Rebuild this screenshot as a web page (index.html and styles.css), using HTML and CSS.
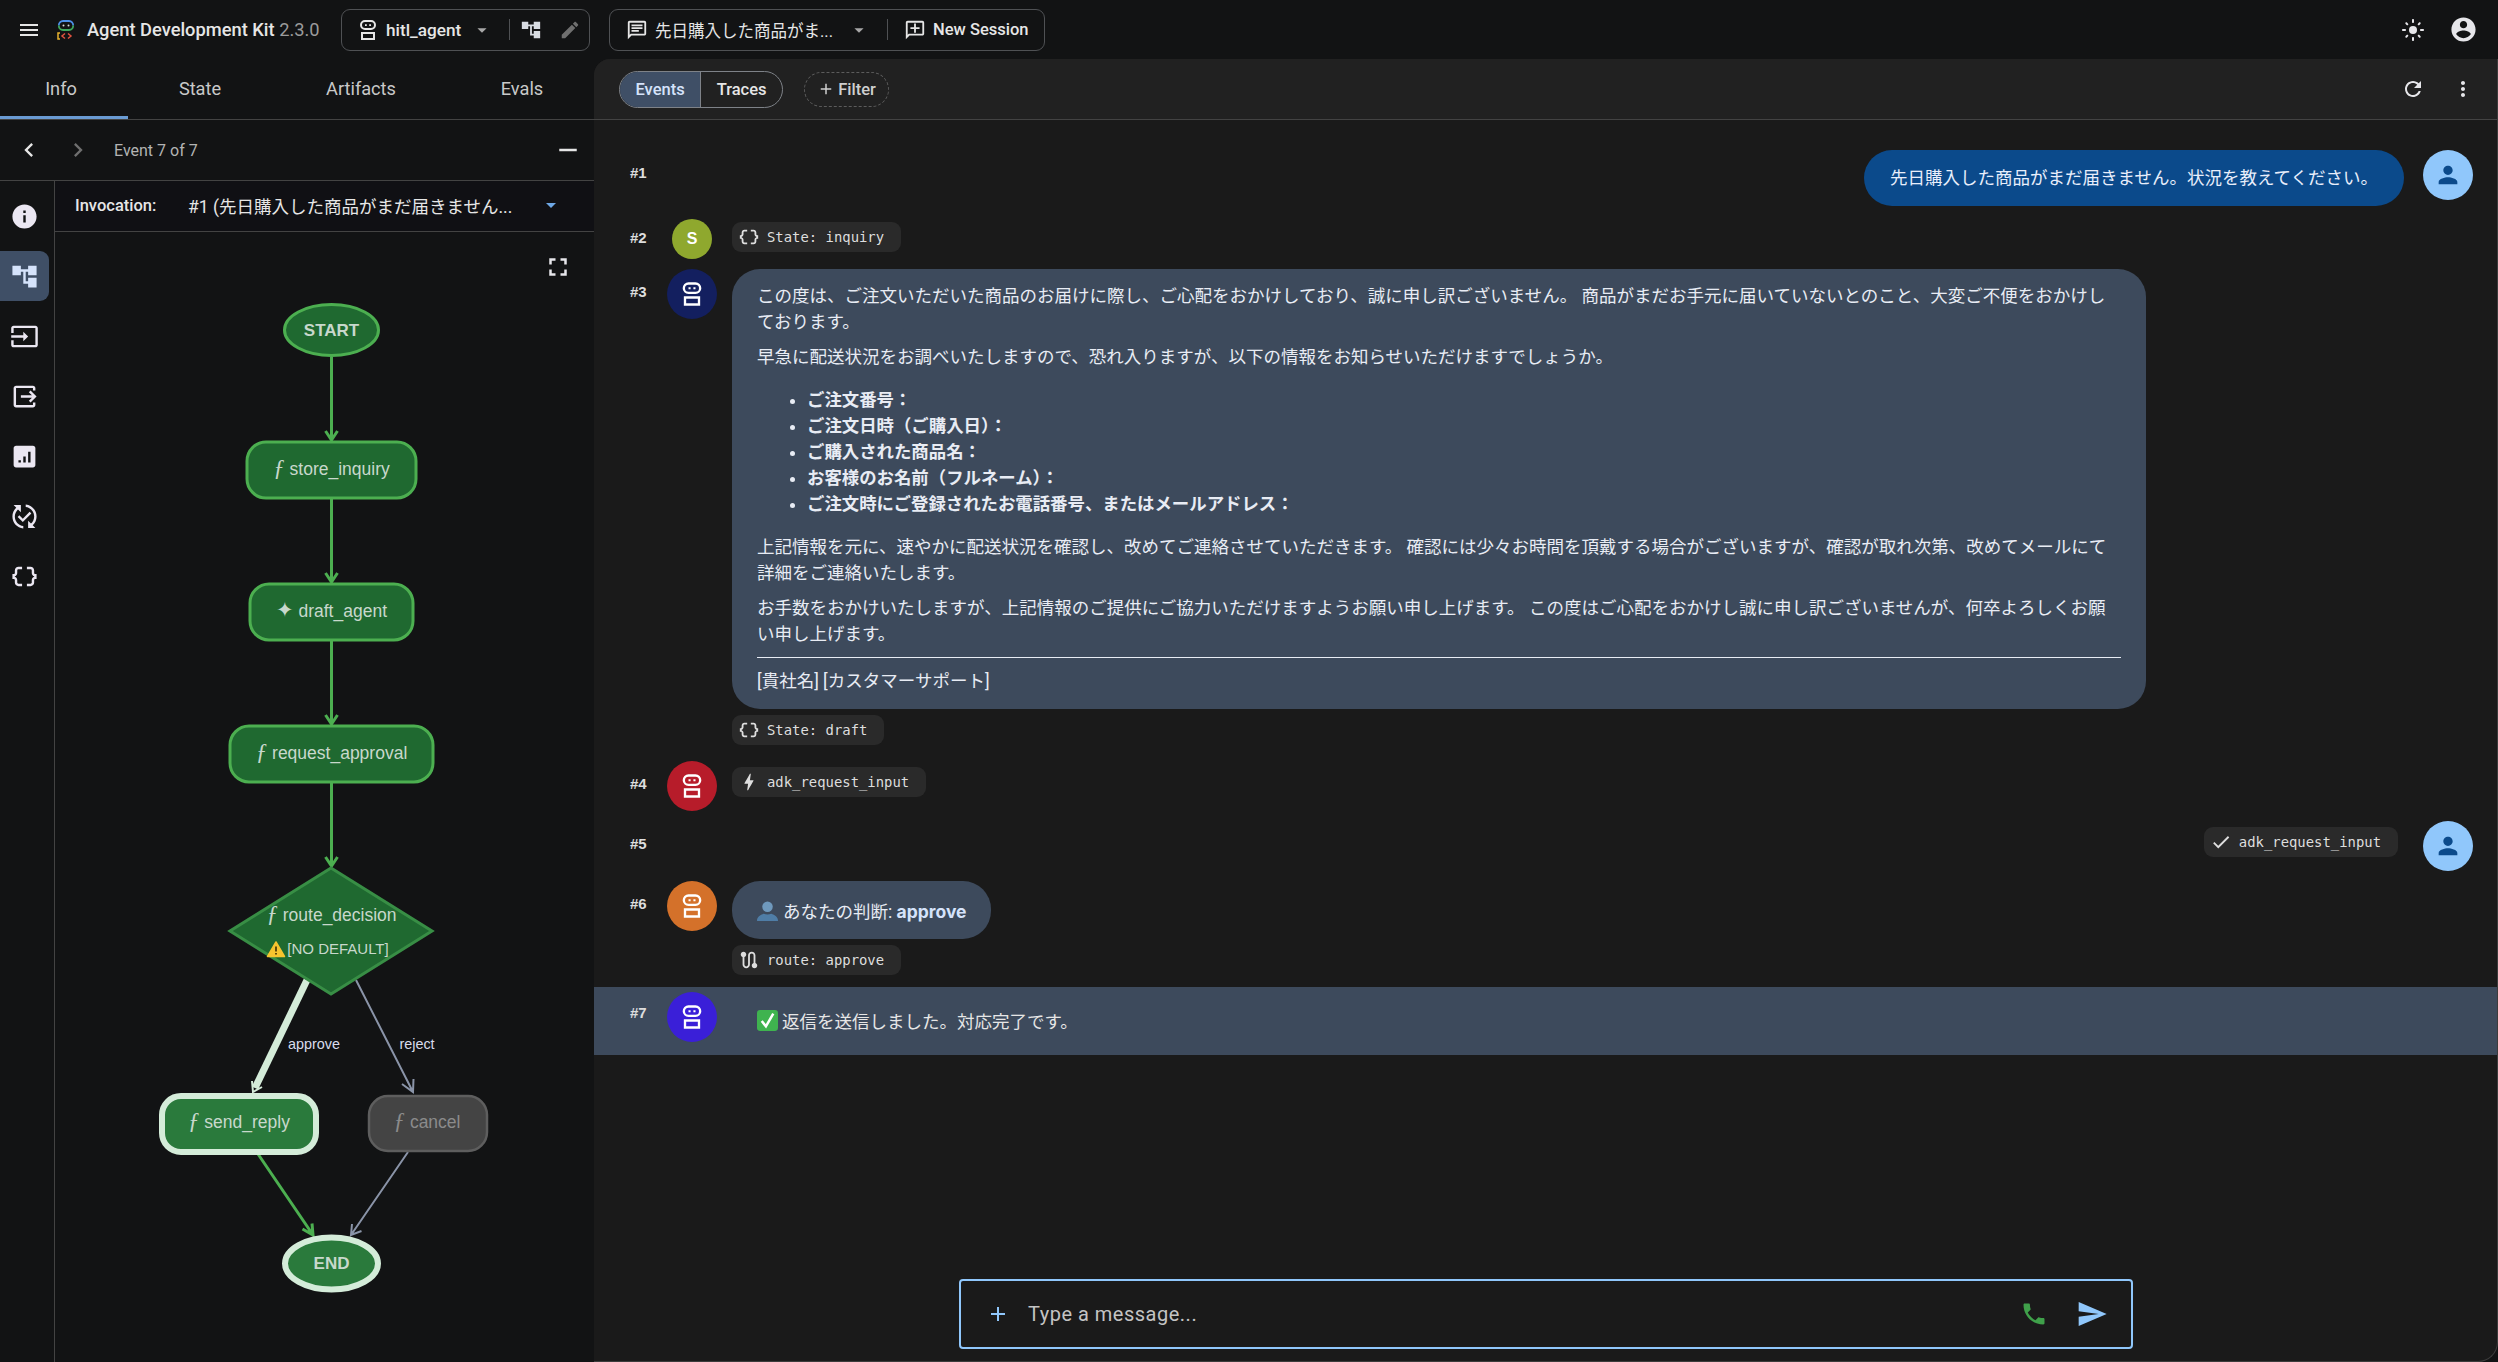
FILE: index.html
```html
<!DOCTYPE html>
<html lang="ja">

<head>
    <meta charset="UTF-8">
    <meta name="viewport" content="width=device-width, initial-scale=1.0">
    <title>Agent Development Kit</title>
    <link rel="stylesheet" href="styles.css">
</head>

<body>
    <svg class="sprite" xmlns="http://www.w3.org/2000/svg">
        <symbol id="i-menu" viewBox="0 0 24 24"><path d="M3 18h18v-2H3v2zm0-5h18v-2H3v2zm0-7v2h18V6H3z"/></symbol>
        <symbol id="i-tree" viewBox="0 0 24 24"><path d="M22 11V3h-7v3H9V3H2v8h7V8h2v10h4v3h7v-8h-7v3h-2V8h2v3z"/></symbol>
        <symbol id="i-edit" viewBox="0 0 24 24"><path d="M3 17.25V21h3.75L17.81 9.94l-3.75-3.75L3 17.25zM20.71 7.04c.39-.39.39-1.02 0-1.41l-2.34-2.34c-.39-.39-1.02-.39-1.41 0l-1.83 1.83 3.75 3.75 1.83-1.83z"/></symbol>
        <symbol id="i-chat" viewBox="0 0 24 24"><path d="M20 2H4c-1.1 0-2 .9-2 2v18l4-4h14c1.1 0 2-.9 2-2V4c0-1.1-.9-2-2-2zm0 14H5.17L4 17.17V4h16v12zM6 12h8v2H6zm0-3h12v2H6zm0-3h12v2H6z"/></symbol>
        <symbol id="i-newchat" viewBox="0 0 24 24"><path d="M20 2H4c-1.1 0-2 .9-2 2v18l4-4h14c1.1 0 2-.9 2-2V4c0-1.1-.9-2-2-2zm0 14H5.17L4 17.17V4h16v12zM11 5h2v4h4v2h-4v4h-2v-4H7V9h4z"/></symbol>
        <symbol id="i-drop" viewBox="0 0 24 24"><path d="M7 10l5 5 5-5z"/></symbol>
        <symbol id="i-bot" viewBox="0 0 24 24"><path fill-rule="evenodd" d="M9 2h6a5 5 0 0 1 0 10H9A5 5 0 0 1 9 2zm0 2a3 3 0 0 0 0 6h6a3 3 0 0 0 0-6zm0 2.2h1.8V8H9zm4.2 0H15V8h-1.800zM5 14h14v8H5zm2 2v4h10v-4z"/></symbol>
        <symbol id="i-info" viewBox="0 0 24 24"><path d="M12 2C6.48 2 2 6.48 2 12s4.48 10 10 10 10-4.48 10-10S17.52 2 12 2zm1 15h-2v-6h2v6zm0-8h-2V7h2v2z"/></symbol>
        <symbol id="i-input" viewBox="0 0 24 24"><path d="M21 3.010H3c-1.100 0-2 .9-2 2V9h2V4.990h18v14.030H3V15H1v4.010c0 1.100.9 1.980 2 1.980h18c1.100 0 2-.88 2-1.980v-14c0-1.110-.9-2-2-2zM11 16l4-4-4-4v3H1v2h10v3z"/></symbol>
        <symbol id="i-output" viewBox="0 0 24 24"><path d="M17 17l5-5-5-5-1.410 1.410L18.170 11H9v2h9.170l-2.580 2.590zM19 19H5V5h14v2h2V5c0-1.100-.9-2-2-2H5c-1.100 0-2 .9-2 2v14c0 1.100.9 2 2 2h14c1.100 0 2-.9 2-2v-2h-2z"/></symbol>
        <symbol id="i-chart" viewBox="0 0 24 24"><path d="M19 3H5c-1.100 0-2 .9-2 2v14c0 1.100.9 2 2 2h14c1.100 0 2-.9 2-2V5c0-1.100-.9-2-2-2zM9 17H7v-2h2v2zm4 0h-2v-5h2v5zm4 0h-2V8h2v9z"/></symbol>
        <symbol id="i-sync" viewBox="0 0 24 24"><path d="M17.660 9.530l-7.070 7.070-4.240-4.240 1.410-1.410 2.830 2.830 5.660-5.660 1.410 1.410zM4 12c0-2.330 1.020-4.420 2.620-5.880L9 8.500v-6H3l2.200 2.200C3.240 6.520 2 9.110 2 12c0 5.190 3.950 9.450 9 9.950v-2.020c-3.940-.49-7-3.860-7-7.930zm18 0c0-5.190-3.950-9.450-9-9.950v2.020c3.940.49 7 3.860 7 7.930 0 2.330-1.020 4.420-2.620 5.880L15 15.500v6h6l-2.200-2.200c1.960-1.820 3.200-4.410 3.200-7.300z"/></symbol>
        <symbol id="i-data" viewBox="0 0 24 24"><path d="M4 7v2c0 .55-.45 1-1 1H2v4h1c.55 0 1 .45 1 1v2c0 1.650 1.350 3 3 3h3v-2H7c-.55 0-1-.45-1-1v-2c0-1.300-.84-2.420-2-2.830v-.34C5.160 11.420 6 10.300 6 9V7c0-.55.45-1 1-1h3V4H7C5.350 4 4 5.350 4 7zM21 10c-.55 0-1-.45-1-1V7c0-1.650-1.350-3-3-3h-3v2h3c.55 0 1 .45 1 1v2c0 1.300.84 2.420 2 2.830v.34c-1.160.41-2 1.520-2 2.830v2c0 .55-.45 1-1 1h-3v2h3c1.650 0 3-1.350 3-3v-2c0-.55.45-1 1-1h1v-4h-1z"/></symbol>
        <symbol id="i-back" viewBox="0 0 24 24"><path d="M15.410 7.410L14 6l-6 6 6 6 1.410-1.410L10.830 12z"/></symbol>
        <symbol id="i-next" viewBox="0 0 24 24"><path d="M10 6L8.590 7.410 13.170 12l-4.580 4.590L10 18l6-6z"/></symbol>
        <symbol id="i-minus" viewBox="0 0 24 24"><path d="M19 13H5v-2h14v2z"/></symbol>
        <symbol id="i-full" viewBox="0 0 24 24"><path d="M7 14H5v5h5v-2H7v-3zm-2-4h2V7h3V5H5v5zm12 7h-3v2h5v-5h-2v3zM14 5v2h3v3h2V5h-5z"/></symbol>
        <symbol id="i-sun" viewBox="0 0 24 24"><circle cx="12" cy="12" r="4"/><path d="M2 13h2c.55 0 1-.45 1-1s-.45-1-1-1H2c-.55 0-1 .45-1 1s.45 1 1 1zm18 0h2c.55 0 1-.45 1-1s-.45-1-1-1h-2c-.55 0-1 .45-1 1s.45 1 1 1zM11 2v2c0 .55.45 1 1 1s1-.45 1-1V2c0-.55-.45-1-1-1s-1 .45-1 1zm0 18v2c0 .55.45 1 1 1s1-.45 1-1v-2c0-.55-.45-1-1-1s-1 .45-1 1zM5.990 4.580c-.39-.39-1.030-.39-1.410 0-.39.39-.39 1.030 0 1.410l1.060 1.060c.39.39 1.030.39 1.410 0s.39-1.030 0-1.410L5.990 4.580zm12.370 12.370c-.39-.39-1.030-.39-1.410 0-.39.39-.39 1.030 0 1.410l1.060 1.060c.39.39 1.030.39 1.410 0 .39-.39.39-1.030 0-1.410l-1.060-1.060zm1.060-10.960c.39-.39.39-1.030 0-1.410-.39-.39-1.030-.39-1.410 0l-1.060 1.060c-.39.39-.39 1.030 0 1.410s1.030.39 1.410 0l1.060-1.060zM7.050 18.360c.39-.39.39-1.030 0-1.410-.39-.39-1.030-.39-1.410 0l-1.060 1.060c-.39.39-.39 1.030 0 1.410s1.030.39 1.410 0l1.060-1.060z"/></symbol>
        <symbol id="i-account" viewBox="0 0 24 24"><path d="M12 2C6.480 2 2 6.480 2 12s4.480 10 10 10 10-4.480 10-10S17.520 2 12 2zm0 3c1.660 0 3 1.340 3 3s-1.340 3-3 3-3-1.340-3-3 1.340-3 3-3zm0 14.200c-2.500 0-4.710-1.280-6-3.220.03-1.990 4-3.080 6-3.080 1.990 0 5.970 1.090 6 3.080-1.290 1.940-3.500 3.220-6 3.220z"/></symbol>
        <symbol id="i-refresh" viewBox="0 0 24 24"><path d="M17.650 6.350C16.200 4.900 14.210 4 12 4c-4.420 0-7.990 3.580-7.990 8s3.570 8 7.990 8c3.730 0 6.840-2.550 7.730-6h-2.080c-.82 2.330-3.040 4-5.650 4-3.310 0-6-2.690-6-6s2.690-6 6-6c1.660 0 3.140.69 4.220 1.780L13 11h7V4l-2.350 2.350z"/></symbol>
        <symbol id="i-more" viewBox="0 0 24 24"><path d="M12 8c1.100 0 2-.9 2-2s-.9-2-2-2-2 .9-2 2 .9 2 2 2zm0 2c-1.100 0-2 .9-2 2s.9 2 2 2 2-.9 2-2-.9-2-2-2zm0 6c-1.100 0-2 .9-2 2s.9 2 2 2 2-.9 2-2-.9-2-2-2z"/></symbol>
        <symbol id="i-person" viewBox="0 0 24 24"><path d="M12 12c2.210 0 4-1.790 4-4s-1.790-4-4-4-4 1.790-4 4 1.790 4 4 4zm0 2c-2.670 0-8 1.340-8 4v2h16v-2c0-2.660-5.330-4-8-4z"/></symbol>
        <symbol id="i-bolt" viewBox="0 0 24 24"><path d="M11 21h-1l1-7H7.500c-.58 0-.57-.32-.38-.66.19-.34.05-.08.07-.12C8.480 10.940 10.420 7.540 13 3h1l-1 7h3.500c.49 0 .56.33.47.51l-.07.15C12.960 17.550 11 21 11 21z"/></symbol>
        <symbol id="i-check" viewBox="0 0 24 24"><path d="M9 16.170L4.830 12l-1.420 1.410L9 19 21 7l-1.410-1.410z"/></symbol>
        <symbol id="i-route" viewBox="0 0 24 24"><path d="M19 15.180V7c0-2.210-1.790-4-4-4s-4 1.790-4 4v10c0 1.100-.9 2-2 2s-2-.9-2-2V8.820C8.160 8.400 9 7.300 9 6c0-1.660-1.340-3-3-3S3 4.340 3 6c0 1.300.84 2.400 2 2.820V17c0 2.210 1.790 4 4 4s4-1.790 4-4V7c0-1.100.9-2 2-2s2 .9 2 2v8.180c-1.160.41-2 1.510-2 2.820 0 1.660 1.340 3 3 3s3-1.340 3-3c0-1.310-.84-2.410-2-2.820z"/></symbol>
        <symbol id="i-send" viewBox="0 0 24 24"><path d="M2.010 21L23 12 2.010 3 2 10l15 2-15 2z"/></symbol>
        <symbol id="i-call" viewBox="0 0 24 24"><path d="M6.620 10.790c1.440 2.830 3.760 5.140 6.590 6.590l2.200-2.200c.27-.27.67-.36 1.020-.24 1.120.37 2.330.57 3.570.57.55 0 1 .45 1 1V20c0 .55-.45 1-1 1-9.390 0-17-7.610-17-17 0-.55.45-1 1-1h3.500c.55 0 1 .45 1 1 0 1.250.2 2.450.57 3.570.11.35.03.74-.25 1.020l-2.200 2.200z"/></symbol>
        <symbol id="i-add" viewBox="0 0 24 24"><path d="M19 13h-6v6h-2v-6H5v-2h6V5h2v6h6v2z"/></symbol>
    </svg>

    <header class="topbar">
        <svg class="icon icon-menu"><use href="#i-menu"/></svg>
        <svg class="logo" viewBox="0 0 18 20">
            <path d="M1.800 5.500C1.800 3 3.500 1 6 1h6c2.500 0 4.200 2 4.200 4.500" fill="none" stroke="#4d8fe8" stroke-width="1.800"/>
            <path d="M1.800 5.500C1.800 8 3.500 10 6 10h6c2.500 0 4.200-2 4.200-4.500" fill="none" stroke="#3fa85c" stroke-width="1.800"/>
            <circle cx="6.500" cy="5.500" r="1" fill="#d8d8d8"/><circle cx="11.500" cy="5.500" r="1" fill="#d8d8d8"/>
            <path d="M3 13H1v6h2" fill="none" stroke="#e8b32e" stroke-width="1.500"/>
            <path d="M8 13.500L5 16l3 2.500" fill="none" stroke="#e0533f" stroke-width="1.500"/>
            <path d="M11 13.500l3 2.500-3 2.500" fill="none" stroke="#e0533f" stroke-width="1.500"/>
        </svg>
        <div class="brand">Agent Development Kit <span class="version">2.3.0</span></div>

        <div class="selector selector-agent">
            <svg class="icon"><use href="#i-bot"/></svg>
            <span class="selector-text agent-name">hitl_agent</span>
            <svg class="icon icon-drop"><use href="#i-drop"/></svg>
            <span class="divider"></span>
            <svg class="icon icon-tree"><use href="#i-tree"/></svg>
            <svg class="icon icon-pencil"><use href="#i-edit"/></svg>
        </div>

        <div class="selector selector-session">
            <svg class="icon icon-20"><use href="#i-chat"/></svg>
            <span class="selector-text session-name">先日購入した商品がま...</span>
            <svg class="icon icon-drop"><use href="#i-drop"/></svg>
            <span class="divider"></span>
            <svg class="icon icon-20"><use href="#i-newchat"/></svg>
            <span class="selector-text new-session">New Session</span>
        </div>

        <div class="actions">
            <button class="icon-btn"><svg class="icon"><use href="#i-sun"/></svg></button>
            <button class="icon-btn"><svg class="icon icon-28"><use href="#i-account"/></svg></button>
        </div>
    </header>

    <div class="layout">
        <aside class="side">
            <nav class="tabs">
                <div class="tab tab-on">Info</div>
                <div class="tab">State</div>
                <div class="tab">Artifacts</div>
                <div class="tab">Evals</div>
            </nav>
            <div class="event-nav">
                <svg class="icon nav-back"><use href="#i-back"/></svg>
                <svg class="icon nav-next"><use href="#i-next"/></svg>
                <span class="event-count">Event 7 of 7</span>
                <svg class="icon nav-min"><use href="#i-minus"/></svg>
            </div>
            <div class="side-body">
                <div class="rail">
                    <div class="rail-item rail-info"><svg class="icon icon-28"><use href="#i-info"/></svg></div>
                    <div class="rail-item rail-on"><svg class="icon icon-28"><use href="#i-tree"/></svg></div>
                    <div class="rail-item"><svg class="icon icon-28"><use href="#i-input"/></svg></div>
                    <div class="rail-item"><svg class="icon icon-28"><use href="#i-output"/></svg></div>
                    <div class="rail-item"><svg class="icon icon-28"><use href="#i-chart"/></svg></div>
                    <div class="rail-item"><svg class="icon icon-28"><use href="#i-sync"/></svg></div>
                    <div class="rail-item"><svg class="icon icon-28"><use href="#i-data"/></svg></div>
                </div>
                <div class="graph-panel">
                    <div class="invocation">
                        <span class="inv-label">Invocation:</span>
                        <span class="inv-value">#1 (先日購入した商品がまだ届きません...</span>
                        <svg class="icon inv-drop"><use href="#i-drop"/></svg>
                    </div>
                    <div class="graph">
                        <svg class="icon graph-full"><use href="#i-full"/></svg>
                        <svg class="graph-svg" viewBox="55 232 539 1130">
                            <!-- edges -->
                            <g class="edge-green">
                                <path d="M331.500 357V440M325.500 431l6 9 6-9"/>
                                <path d="M331.500 499V582M325.500 573l6 9 6-9"/>
                                <path d="M331.500 641V724M325.500 715l6 9 6-9"/>
                                <path d="M331.500 783V866M325.500 857l6 9 6-9"/>
                                <path d="M258 1154L313 1235M302.500 1229l10.500 6-1-11.500"/>
                            </g>
                            <g class="edge-grey">
                                <path d="M356 980L413 1092M402 1084l11 8 .5-13"/>
                                <path d="M408 1152L351 1235M352 1224l-1 11 10.500-4"/>
                            </g>
                            <path class="edge-hot" d="M307 980L255 1088"/>
                            <path class="edge-hot-tip" d="M252 1081l1 11 9-5"/>

                            <!-- nodes -->
                            <ellipse class="node" cx="331.500" cy="330" rx="47" ry="25.500"/>
                            <rect class="node" x="247" y="442" width="169" height="56" rx="19"/>
                            <rect class="node" x="250" y="584" width="163" height="56" rx="19"/>
                            <rect class="node" x="230" y="726" width="203" height="56" rx="19"/>
                            <polygon class="node-thin" points="331,868 432,931 331,994 230,931"/>
                            <rect class="node-on" x="162" y="1096" width="154" height="56" rx="19"/>
                            <rect class="node-off" x="369" y="1096" width="118" height="55" rx="19"/>
                            <ellipse class="node-on" cx="331.500" cy="1263.500" rx="46.500" ry="26"/>

                            <!-- labels -->
                            <text class="node-strong" x="331.500" y="336">START</text>
                            <text class="node-text" x="331.500" y="475"><tspan class="fn">ƒ</tspan> store_inquiry</text>
                            <text class="node-text" x="331.500" y="617"><tspan class="star">✦</tspan> draft_agent</text>
                            <text class="node-text" x="331.500" y="759"><tspan class="fn">ƒ</tspan> request_approval</text>
                            <text class="node-text" x="331.500" y="921"><tspan class="fn">ƒ</tspan> route_decision</text>
                            <text class="node-small" x="338" y="954">[NO DEFAULT]</text>
                            <text class="node-text" x="239" y="1128"><tspan class="fn">ƒ</tspan> send_reply</text>
                            <text class="node-text node-text-off" x="427" y="1128"><tspan class="fn">ƒ</tspan> cancel</text>
                            <text class="node-strong" x="331.500" y="1269">END</text>
                            <text class="edge-label" x="314" y="1049">approve</text>
                            <text class="edge-label" x="417" y="1049">reject</text>

                            <path d="M276 942l8.500 14.500h-17z" fill="#f6c42f" stroke="#f6c42f" stroke-width="1.500" stroke-linejoin="round"/>
                            <path d="M276 946.500v5M276 953v1.500" stroke="#3b2c00" stroke-width="1.600"/>
                        </svg>
                    </div>
                </div>
            </div>
        </aside>

        <main class="main">
            <div class="toolbar">
                <div class="segmented">
                    <div class="seg seg-on">Events</div>
                    <div class="seg">Traces</div>
                </div>
                <div class="filter"><svg class="icon icon-filter"><use href="#i-add"/></svg>Filter</div>
                <div class="actions">
                    <button class="icon-btn"><svg class="icon"><use href="#i-refresh"/></svg></button>
                    <button class="icon-btn"><svg class="icon"><use href="#i-more"/></svg></button>
                </div>
            </div>

            <section class="messages">
                <div class="msg msg-first">
                    <span class="num">#1</span>
                    <div class="user-side">
                        <div class="bubble-user">先日購入した商品がまだ届きません。状況を教えてください。</div>
                        <div class="avatar avatar-user"><svg class="icon"><use href="#i-person"/></svg></div>
                    </div>
                </div>

                <div class="msg">
                    <span class="num num-up">#2</span>
                    <div class="avatar-slot"><div class="avatar avatar-s">S</div></div>
                    <div class="msg-body">
                        <div class="pill pill-up"><svg class="icon pill-icon"><use href="#i-data"/></svg>State: inquiry</div>
                    </div>
                </div>

                <div class="msg">
                    <span class="num">#3</span>
                    <div class="avatar-slot"><div class="avatar avatar-navy"><svg class="icon"><use href="#i-bot"/></svg></div></div>
                    <div class="msg-body">
                        <div class="bubble bubble-long">
                            <p>この度は、ご注文いただいた商品のお届けに際し、ご心配をおかけしており、誠に申し訳ございません。 商品がまだお手元に届いていないとのこと、大変ご不便をおかけしております。</p>
                            <p>早急に配送状況をお調べいたしますので、恐れ入りますが、以下の情報をお知らせいただけますでしょうか。</p>
                            <ul>
                                <li>ご注文番号：</li>
                                <li>ご注文日時（ご購入日）：</li>
                                <li>ご購入された商品名：</li>
                                <li>お客様のお名前（フルネーム）：</li>
                                <li>ご注文時にご登録されたお電話番号、またはメールアドレス：</li>
                            </ul>
                            <p>上記情報を元に、速やかに配送状況を確認し、改めてご連絡させていただきます。 確認には少々お時間を頂戴する場合がございますが、確認が取れ次第、改めてメールにて詳細をご連絡いたします。</p>
                            <p>お手数をおかけいたしますが、上記情報のご提供にご協力いただけますようお願い申し上げます。 この度はご心配をおかけし誠に申し訳ございませんが、何卒よろしくお願い申し上げます。</p>
                            <hr>
                            <p>[貴社名] [カスタマーサポート]</p>
                        </div>
                        <div class="pill"><svg class="icon pill-icon"><use href="#i-data"/></svg>State: draft</div>
                    </div>
                </div>

                <div class="msg">
                    <span class="num">#4</span>
                    <div class="avatar-slot"><div class="avatar avatar-red"><svg class="icon"><use href="#i-bot"/></svg></div></div>
                    <div class="msg-body">
                        <div class="pill"><svg class="icon pill-icon"><use href="#i-bolt"/></svg>adk_request_input</div>
                    </div>
                </div>

                <div class="msg msg-short">
                    <span class="num">#5</span>
                    <div class="user-side">
                        <div class="pill"><svg class="icon pill-icon"><use href="#i-check"/></svg>adk_request_input</div>
                        <div class="avatar avatar-user"><svg class="icon"><use href="#i-person"/></svg></div>
                    </div>
                </div>

                <div class="msg msg-before-on">
                    <span class="num">#6</span>
                    <div class="avatar-slot"><div class="avatar avatar-orange"><svg class="icon"><use href="#i-bot"/></svg></div></div>
                    <div class="msg-body">
                        <div class="bubble bubble-short">
                            <svg class="emoji" viewBox="0 0 20 20">
                                <circle cx="10" cy="6.500" r="5" fill="#6f99bd"/>
                                <path d="M0 20c0-4 3-6 6.500-7 2 1 5 1 7 0 3.500 1 6.500 3 6.500 7z" fill="#4f7da6"/>
                            </svg>
                            <span>あなたの判断: <b>approve</b></span>
                        </div>
                        <div class="pill"><svg class="icon pill-icon"><use href="#i-route"/></svg>route: approve</div>
                    </div>
                </div>

                <div class="msg msg-on">
                    <span class="num num-on">#7</span>
                    <div class="avatar-slot"><div class="avatar avatar-purple"><svg class="icon"><use href="#i-bot"/></svg></div></div>
                    <div class="msg-body msg-plain">
                        <svg class="emoji" viewBox="0 0 20 20">
                            <rect width="20" height="20" rx="3" fill="#3fb34f"/>
                            <path d="M4.500 10.500l4 5 7-12" fill="none" stroke="#fff" stroke-width="2.400"/>
                        </svg>
                        <span>返信を送信しました。対応完了です。</span>
                    </div>
                </div>
            </section>

            <div class="composer">
                <div class="input-box">
                    <svg class="icon input-plus"><use href="#i-add"/></svg>
                    <span class="placeholder">Type a message...</span>
                    <svg class="icon input-call"><use href="#i-call"/></svg>
                    <svg class="icon input-send"><use href="#i-send"/></svg>
                </div>
            </div>
        </main>
    </div>
</body>

</html>
```

FILE: styles.css
```css
* {
    box-sizing: border-box;
}

html, body {
    height: 100%;
}

body {
    margin: 0;
    display: flex;
    flex-direction: column;
    overflow: hidden;
    background-color: #121314;
    color: #e6e6e6;
    font-family: Roboto, "Noto Sans CJK JP", sans-serif;
    font-size: 17.5px;
}

.sprite {
    display: none;
}

.icon {
    width: 24px;
    height: 24px;
    fill: currentColor;
    flex-shrink: 0;
    display: block;
}

.icon-20 { width: 22px; height: 22px; }
.icon-28 { width: 29px; height: 29px; }

/* top bar */
.topbar {
    height: 59px;
    flex-shrink: 0;
    display: flex;
    align-items: center;
    padding-left: 17px;
}

.logo {
    width: 18px;
    height: 20px;
    margin-left: 16px;
    margin-right: 12px;
    flex-shrink: 0;
}

.brand {
    width: 254px;
    font-size: 18.3px;
    font-weight: 500;
    white-space: nowrap;
}

.version {
    color: #9b9b9b;
    font-weight: 400;
}

.selector {
    height: 42px;
    border: 1px solid #4f5154;
    border-radius: 9px;
    display: flex;
    align-items: center;
    margin-right: 19px;
}

.selector-agent {
    width: 249px;
    padding-left: 14px;
}

.selector-session {
    width: 436px;
    padding-left: 16px;
}

.selector-text {
    font-size: 16.5px;
    font-weight: 500;
    white-space: nowrap;
}

.agent-name { width: 85px; margin-left: 6px; font-size: 17.2px; }
.session-name { width: 193px; margin-left: 7px; font-weight: 400; }
.new-session { margin-left: 7px; }

.icon-drop {
    width: 22px;
    height: 22px;
    color: #a8a8a8;
}

.divider {
    width: 1px;
    height: 21px;
    background-color: #4f5154;
    margin-left: 16px;
    margin-right: 10px;
}

.selector-session .divider {
    margin-left: 17px;
    margin-right: 16px;
}

.icon-tree {
    width: 22px;
    height: 22px;
    color: #d8dce2;
}

.icon-pencil {
    width: 22px;
    height: 22px;
    margin-left: 17px;
    color: #6f6f6f;
}

.actions {
    margin-left: auto;
    padding-right: 20px;
    display: flex;
    gap: 20px;
}

.toolbar .actions {
    padding-right: 19px;
}

.icon-btn {
    width: 30px;
    height: 30px;
    padding: 0;
    background: none;
    border: none;
    color: #e6e6ea;
    display: flex;
    align-items: center;
    justify-content: center;
}

/* layout */
.layout {
    flex: 1;
    display: flex;
    min-height: 0;
}

.side {
    width: 594px;
    flex-shrink: 0;
    display: flex;
    flex-direction: column;
}

.tabs {
    height: 61px;
    flex-shrink: 0;
    display: grid;
    grid-template-columns: 128px 144px 178px 144px;
    border-bottom: 1px solid #434343;
}

.tab {
    display: flex;
    align-items: center;
    justify-content: center;
    padding-bottom: 2px;
    font-size: 18.2px;
    color: #c9c9c9;
}

.tab-on {
    padding-right: 6px;
    box-shadow: inset 0 -3px 0 #6a9bd3;
}

.event-nav {
    height: 61px;
    flex-shrink: 0;
    display: flex;
    align-items: center;
    border-bottom: 1px solid #434343;
    padding-left: 15px;
    padding-right: 11px;
}

.nav-back {
    width: 28px;
    height: 28px;
}

.nav-next {
    width: 28px;
    height: 28px;
    margin-left: 21px;
    color: #6f6f6f;
}

.event-count {
    margin-left: 22px;
    font-size: 16px;
    color: #b3b3b3;
}

.nav-min {
    width: 30px;
    height: 30px;
    margin-left: auto;
}

.side-body {
    flex: 1;
    display: flex;
    min-height: 0;
}

.rail {
    width: 55px;
    flex-shrink: 0;
    border-right: 1px solid #434343;
    padding-top: 10px;
    display: flex;
    flex-direction: column;
    gap: 10px;
}

.rail-item {
    width: 49px;
    height: 50px;
    display: flex;
    align-items: center;
    justify-content: center;
    color: #ebe7f2;
    border-radius: 0 9px 9px 0;
}

.rail-on {
    background-color: #3f4f66;
    color: #d5e3fb;
}

.graph-panel {
    flex: 1;
    display: flex;
    flex-direction: column;
    min-width: 0;
}

.invocation {
    height: 51px;
    flex-shrink: 0;
    display: flex;
    align-items: center;
    border-bottom: 1px solid #434343;
    background-color: #101014;
    padding: 0 0 2px 20px;
    font-size: 16.5px;
}

.inv-label {
    width: 113px;
    font-weight: 500;
}

.inv-value {
    width: 351px;
    white-space: nowrap;
    font-size: 17.5px;
}

.inv-drop {
    color: #6ea8e6;
}

.graph {
    flex: 1;
    position: relative;
    min-height: 0;
}

.graph-svg {
    display: block;
    width: 539px;
    height: 1130px;
}

.graph-full {
    position: absolute;
    top: 20px;
    right: 21px;
    width: 30px;
    height: 30px;
    color: #e6e6ea;
}

.edge-green path {
    fill: none;
    stroke: #4caf50;
    stroke-width: 3;
}

.edge-grey path {
    fill: none;
    stroke: #8a94a8;
    stroke-width: 2;
}

.edge-hot {
    fill: none;
    stroke: #d4ecd9;
    stroke-width: 7;
}

.edge-hot-tip {
    fill: none;
    stroke: #d4ecd9;
    stroke-width: 2;
}

.node {
    fill: #1f6930;
    stroke: #4caf50;
    stroke-width: 3;
}

.node-thin {
    fill: #1f6930;
    stroke: #388e45;
    stroke-width: 3;
}

.node-on {
    fill: #2a7a3c;
    stroke: #d4ecd9;
    stroke-width: 6;
}

.node-off {
    fill: #444444;
    stroke: #5e5e5e;
    stroke-width: 2.5;
}

.node-text, .node-strong, .node-small, .edge-label {
    font-family: "Liberation Sans", sans-serif;
    text-anchor: middle;
    fill: #c8d8cc;
}

.node-text { font-size: 17.5px; }
.node-text-off { fill: #8b8b8b; }
.node-strong { font-size: 17px; font-weight: 700; }
.node-small { font-size: 15px; }
.edge-label { font-size: 14.4px; fill: #d9dcec; }

.fn {
    font-family: "Liberation Serif", serif;
    font-style: italic;
    font-size: 23px;
}

.star {
    font-family: "DejaVu Sans", sans-serif;
    font-size: 21px;
}

/* chat side */
.main {
    flex: 1;
    min-width: 0;
    display: flex;
    flex-direction: column;
    background-color: #1a1a1a;
    border-right: 1px solid #3c3c3c;
    border-bottom: 1px solid #3c3c3c;
    border-top-left-radius: 16px;
    border-bottom-right-radius: 20px;
    overflow: hidden;
}

.toolbar {
    height: 61px;
    flex-shrink: 0;
    display: flex;
    align-items: center;
    padding-left: 25px;
    background-color: #212121;
    border-bottom: 1px solid #434343;
}

.segmented {
    display: flex;
    height: 37px;
    border: 1px solid #7e8288;
    border-radius: 19px;
    overflow: hidden;
    font-size: 16.5px;
    font-weight: 500;
}

.seg {
    padding: 0 15.5px;
    display: flex;
    align-items: center;
}

.seg-on {
    background-color: #3f4f66;
    color: #d5e3fb;
    border-right: 1px solid #7e8288;
}

.filter {
    margin-left: 21px;
    height: 35px;
    width: 85px;
    border: 1px dashed #5c5c5c;
    border-radius: 18px;
    display: flex;
    align-items: center;
    justify-content: center;
    font-size: 16.5px;
    font-weight: 500;
    color: #cfcfcf;
}

.icon-filter {
    width: 18px;
    height: 18px;
    margin-right: 3px;
}

.messages {
    flex: 1;
    min-height: 0;
    padding-top: 30px;
}

.msg {
    display: flex;
    align-items: flex-start;
    padding-left: 36px;
    padding-right: 24px;
    margin-bottom: 10px;
}

.msg-first {
    margin-bottom: 13px;
}

.msg-before-on {
    margin-bottom: 6px;
}

.num {
    width: 37px;
    flex-shrink: 0;
    margin-top: 15px;
    font-family: "Liberation Sans", sans-serif;
    font-size: 15px;
    line-height: 16px;
    font-weight: 700;
    color: #dddddd;
}

.num-up {
    margin-top: 11px;
}

.num-on {
    margin-top: 13px;
}

.avatar-slot {
    width: 50px;
    flex-shrink: 0;
    display: flex;
    justify-content: center;
}

.avatar {
    width: 50px;
    height: 50px;
    border-radius: 50%;
    flex-shrink: 0;
    display: flex;
    align-items: center;
    justify-content: center;
    color: #fff;
}

.avatar .icon {
    width: 28px;
    height: 28px;
}

.avatar-s {
    width: 40px;
    height: 40px;
    background-color: #8fa82e;
    font-size: 16px;
    font-weight: 700;
    font-family: "Liberation Sans", sans-serif;
}

.avatar-navy { background-color: #131f5f; }
.avatar-red { background-color: #b71c2a; }
.avatar-orange { background-color: #d4712a; }
.avatar-purple { background-color: #3a1fd8; }

.avatar-user {
    background-color: #90c7fb;
    color: #0b4a8b;
    margin-left: 19px;
}

.msg-body {
    margin-left: 15px;
    flex: 1;
    min-width: 0;
    display: flex;
    flex-direction: column;
    align-items: flex-start;
}

.user-side {
    margin-left: auto;
    display: flex;
    align-items: flex-start;
}

.user-side .pill {
    margin-right: 6px;
}

.bubble-user {
    height: 56px;
    padding: 0 26px 3px;
    display: flex;
    align-items: center;
    background-color: #0b4a8b;
    border-radius: 28px;
    color: #e8eefb;
}

.bubble {
    background-color: #3d4a5c;
    color: #e8ecf4;
}

.bubble-long {
    width: 1414px;
    padding: 14px 25px 15px;
    border-radius: 28px;
    line-height: 26px;
}

.bubble p {
    margin: 0 0 9px;
}

.bubble p:last-child {
    margin-bottom: 0;
}

.bubble ul {
    margin: 17px 0 17px;
    padding-left: 50px;
    font-weight: 700;
    font-size: 17.4px;
}

.bubble hr {
    border: none;
    border-top: 1px solid #e8ecf4;
    margin: 10px 0;
}

.bubble-short {
    height: 58px;
    padding: 0 24px 0 25px;
    display: flex;
    align-items: center;
    gap: 5px;
    border-radius: 28px;
}

.bubble-short b {
    font-family: Inter, Roboto, sans-serif;
    color: #d5e3fb;
}

.emoji {
    width: 21px;
    height: 21px;
    flex-shrink: 0;
}

.pill {
    height: 30px;
    margin: 6px 0;
    padding: 0 17px 0 6px;
    display: flex;
    align-items: center;
    background-color: #2a2a2a;
    border-radius: 9px;
    font-family: "DejaVu Sans Mono", monospace;
    font-size: 13.9px;
    color: #dedede;
    white-space: nowrap;
}

.pill-up {
    margin-top: 3px;
}

.pill-icon {
    width: 22px;
    height: 22px;
    margin-right: 7px;
}

.msg-on {
    background-color: #3d4a5c;
    height: 68px;
    padding-top: 5px;
    margin-bottom: 0;
}

.msg-plain {
    flex-direction: row;
    align-items: center;
    gap: 4px;
    margin-left: 40px;
    margin-top: 16px;
}

/* input */
.composer {
    flex-shrink: 0;
    padding: 0 0 12px 365px;
}

.input-box {
    width: 1174px;
    height: 70px;
    display: flex;
    align-items: center;
    border: 2px solid #90c7fb;
    border-radius: 4px;
    padding-left: 25px;
    padding-right: 23px;
}

.input-plus {
    color: #90c7fb;
}

.placeholder {
    margin-left: 18px;
    font-size: 20px;
    letter-spacing: .5px;
    color: #c4c4c4;
}

.input-call {
    width: 28px;
    height: 28px;
    margin-left: auto;
    color: #3fa04a;
}

.input-send {
    margin-left: 28px;
    width: 32px;
    height: 32px;
    color: #90c7fb;
}
```
